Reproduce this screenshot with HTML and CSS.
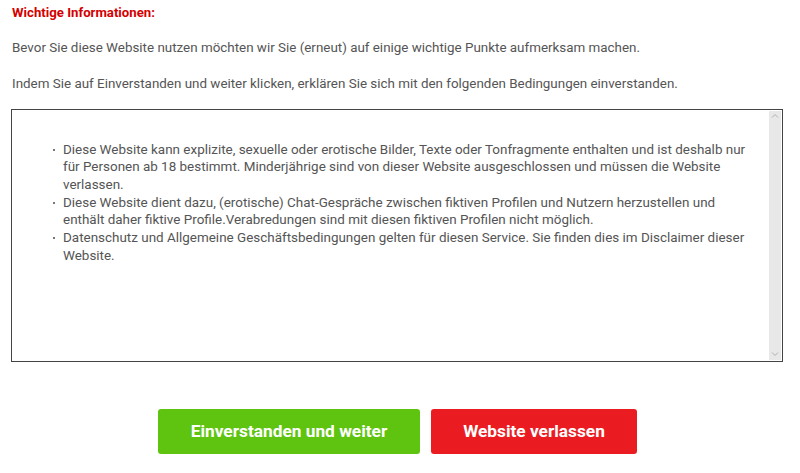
FILE: index.html
```html
<!DOCTYPE html>
<html lang="de">
<head>
<meta charset="utf-8">
<title>Wichtige Informationen</title>
<link rel="stylesheet" href="styles.css">
</head>
<body>
<div class="page">
  <h1 class="title">Wichtige Informationen:</h1>
  <p class="intro">Bevor Sie diese Website nutzen möchten wir Sie (erneut) auf einige wichtige Punkte aufmerksam machen.</p>
  <p class="intro">Indem Sie auf Einverstanden und weiter klicken, erklären Sie sich mit den folgenden Bedingungen einverstanden.</p>
  <div class="box">
    <div class="box-content">
      <ul class="terms">
        <li>Diese Website kann explizite, sexuelle oder erotische Bilder, Texte oder Tonfragmente enthalten und ist deshalb nur für Personen ab 18 bestimmt. Minderjährige sind von dieser Website ausgeschlossen und müssen die Website verlassen.</li>
        <li>Diese Website dient dazu, (erotische) Chat-Gespräche zwischen fiktiven Profilen und Nutzern herzustellen und enthält daher fiktive Profile.Verabredungen sind mit diesen fiktiven Profilen nicht möglich.</li>
        <li>Datenschutz und Allgemeine Geschäftsbedingungen gelten für diesen Service. Sie finden dies im Disclaimer dieser Website.</li>
      </ul>
    </div>
    <div class="scrollbar">
      <svg class="arrow" width="8" height="6" viewBox="0 0 8 6"><path d="M1 4.5 L4 1.5 L7 4.5" fill="none" stroke="#b0b0b0" stroke-width="1"/></svg>
      <svg class="arrow" width="8" height="6" viewBox="0 0 8 6"><path d="M1 1.5 L4 4.5 L7 1.5" fill="none" stroke="#b0b0b0" stroke-width="1"/></svg>
    </div>
  </div>
  <div class="actions">
    <a class="btn btn-accept" href="#">Einverstanden und weiter</a>
    <a class="btn btn-leave" href="#">Website verlassen</a>
  </div>
</div>
</body>
</html>
```
FILE: styles.css
```css
html, body {
  margin: 0;
  padding: 0;
  background: #fff;
}
body {
  font-family: Roboto, "Liberation Sans", Arial, sans-serif;
  color: #555;
}
.page {
  padding: 5px 17px 0 11px;
}
.title {
  margin: 0 0 0 1px;
  font-size: 13.2px;
  line-height: 16px;
  font-weight: bold;
  color: #d40000;
}
.intro {
  margin: 19px 0 0 1px;
  font-size: 13.4px;
  line-height: 16px;
}
.intro + .intro {
  margin-top: 19.5px;
}
.box {
  margin-top: 17.5px;
  height: 251px;
  border: 1px solid #444;
  display: flex;
}
.box-content {
  flex: 1;
  padding-top: 30.5px;
}
.terms {
  margin: 0;
  padding: 0 16px 0 51px;
  list-style: none;
  font-size: 13.45px;
  line-height: 17.7px;
}
.terms li {
  position: relative;
}
.terms li::before {
  content: "";
  position: absolute;
  left: -10px;
  top: 8px;
  width: 2px;
  height: 2px;
  background: #777;
}
.scrollbar {
  width: 12px;
  margin: 1px 1px 1px 0;
  background: #e8e8e8;
  display: flex;
  flex-direction: column;
  justify-content: space-between;
  align-items: center;
  padding: 2px 0 3px;
}
.arrow {
  display: block;
}
.actions {
  display: flex;
  justify-content: center;
  gap: 11px;
  margin-top: 46.5px;
  padding-left: 1px;
}
.btn {
  display: flex;
  align-items: center;
  justify-content: center;
  height: 45px;
  border-radius: 3px;
  color: #fff;
  text-decoration: none;
  font-weight: bold;
  font-size: 17.3px;
}
.btn-accept {
  width: 262px;
  background: #5ec40f;
}
.btn-leave {
  width: 206px;
  background: #ea1c22;
}
```
